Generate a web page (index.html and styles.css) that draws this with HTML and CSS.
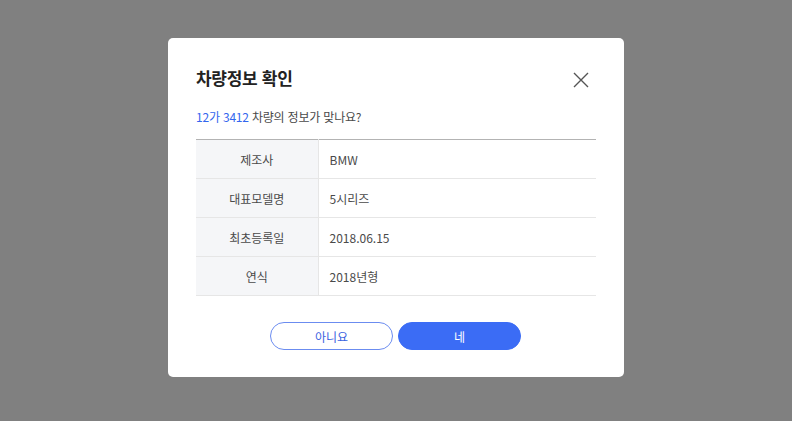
FILE: index.html
```html
<!DOCTYPE html>
<html lang="ko">
<head>
<meta charset="utf-8">
<link rel="stylesheet" href="styles.css">
</head>
<body>
<div class="overlay">
  <div class="modal">
    <div class="head">
      <h1 class="title">차량정보 확인</h1>
      <button class="close" aria-label="닫기">
        <svg width="16" height="16" viewBox="0 0 16 16"><path d="M1 1L15 15M15 1L1 15" stroke="#555" stroke-width="1.4" fill="none"/></svg>
      </button>
    </div>
    <p class="desc"><span class="num">12가 3412</span> 차량의 정보가 맞나요?</p>
    <table class="info">
      <tr><th>제조사</th><td>BMW</td></tr>
      <tr><th>대표모델명</th><td>5시리즈</td></tr>
      <tr><th>최초등록일</th><td>2018.06.15</td></tr>
      <tr><th>연식</th><td>2018년형</td></tr>
    </table>
    <div class="actions">
      <button class="btn btn-line">아니요</button>
      <button class="btn btn-fill">네</button>
    </div>
  </div>
</div>
</body>
</html>
```
FILE: styles.css
```css
* { box-sizing: border-box; }
html, body { margin: 0; padding: 0; }
body {
  width: 792px;
  height: 421px;
  background: #808080;
  font-family: "Noto Sans CJK KR", "Noto Sans", sans-serif;
  color: #333;
}
.overlay {
  padding-top: 38px;
  display: flex;
  justify-content: center;
}
.modal {
  width: 456px;
  height: 339px;
  background: #fff;
  border-radius: 5px;
  padding: 28px 28px 0;
}
.head {
  display: flex;
  justify-content: space-between;
  align-items: center;
  height: 24px;
}
.title {
  margin: 0;
  font-size: 17px;
  font-weight: 700;
  color: #222;
  line-height: 24px;
  letter-spacing: -0.3px;
}
.close {
  border: 0;
  background: none;
  padding: 0;
  width: 16px;
  height: 16px;
  margin-right: 7px;
  margin-top: 4px;
  display: flex;
}
.desc {
  margin: 18px 0 0;
  font-size: 12px;
  line-height: 18px;
  color: #4a4a4a;
  letter-spacing: -0.2px;
}
.num { color: #3366ee; }
.info {
  margin-top: 13px;
  width: 400px;
  border-collapse: collapse;
  border-top: 1px solid #b3b3b3;
  font-size: 12px;
}
.info th, .info td {
  height: 39px;
  border-bottom: 1px solid #e6e6e6;
  padding: 0;
  font-weight: 400;
  color: #4a4a4a;
}
.info th {
  width: 122px;
  background: #f5f6f8;
  border-right: 1px solid #e6e6e6;
  text-align: center;
}
.info td {
  text-align: left;
  padding-left: 11px;
}
.actions {
  display: flex;
  justify-content: center;
  gap: 5px;
  margin-top: 26px;
  padding-right: 1px;
}
.btn {
  width: 123px;
  height: 28px;
  border-radius: 14px;
  font-family: inherit;
  font-size: 12px;
  padding: 0;
  cursor: pointer;
}
.btn-line {
  background: #fff;
  border: 1px solid #6b8cf0;
  color: #3a62e0;
}
.btn-fill {
  background: #3b6cf5;
  border: 1px solid #3b6cf5;
  color: #fff;
}
```
